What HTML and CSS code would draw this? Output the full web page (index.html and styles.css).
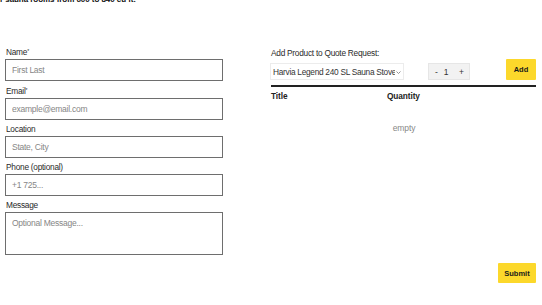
FILE: index.html
```html
<!DOCTYPE html>
<html lang="en">
<head>
<meta charset="utf-8">
<title>Quote Request</title>
<link rel="stylesheet" href="styles.css">
</head>
<body>
<p class="intro">r sauna rooms from 600 to 840 cu ft.</p>
<form class="form">
  <div class="cols">
    <div class="left">
      <div class="field">
        <label class="label">Name<span class="req">*</span></label>
        <input class="input" type="text" placeholder="First Last">
      </div>
      <div class="field">
        <label class="label">Email<span class="req">*</span></label>
        <input class="input" type="text" placeholder="example@email.com">
      </div>
      <div class="field">
        <label class="label">Location</label>
        <input class="input" type="text" placeholder="State, City">
      </div>
      <div class="field">
        <label class="label">Phone (optional)</label>
        <input class="input" type="text" placeholder="+1 725...">
      </div>
      <div class="field">
        <label class="label">Message</label>
        <textarea class="input area" placeholder="Optional Message..."></textarea>
      </div>
    </div>
    <div class="right">
      <div class="label rlabel">Add Product to Quote Request:</div>
      <div class="prow">
        <div class="select">
          <span class="seltext">Harvia Legend 240 SL Sauna Stove</span>
          <svg class="chev" width="5" height="3" viewBox="0 0 5 3"><path d="M0.5 0.5 L2.5 2.5 L4.5 0.5" fill="none" stroke="#777" stroke-width="0.8"/></svg>
        </div>
        <div class="qty">
          <span class="qminus">-</span>
          <span class="qval">1</span>
          <span class="qplus">+</span>
        </div>
        <button type="button" class="btn add">Add</button>
      </div>
      <div class="rule"></div>
      <div class="thead">
        <span class="th-title">Title</span>
        <span class="th-qty">Quantity</span>
      </div>
      <div class="empty">empty</div>
    </div>
  </div>
  <div class="actions">
    <button type="button" class="btn submit">Submit</button>
  </div>
</form>
</body>
</html>
```

FILE: styles.css
```css
body {
  margin: 0;
  width: 542px;
  height: 305px;
  overflow: hidden;
  background: #fff;
  color: #222;
  font-family: "Liberation Sans", Arial, sans-serif;
}

.intro {
  margin: -6px 0 0 0;
  font-size: 8px;
  line-height: 11px;
  font-weight: bold;
  letter-spacing: -0.05px;
  white-space: nowrap;
  color: #111;
}

.form {
  padding: 41px 6px 0 5px;
}

.cols {
  display: flex;
  justify-content: space-between;
}

.left {
  width: 218px;
  display: flex;
  flex-direction: column;
  gap: 4px;
}

.field {
  display: flex;
  flex-direction: column;
  gap: 1px;
}

.label {
  font-size: 8.3px;
  line-height: 11px;
  letter-spacing: -0.25px;
  color: #2a2a2a;
  padding-left: 1px;
}

.req {
  font-size: 5px;
  vertical-align: 2px;
}

.input {
  display: block;
  width: 100%;
  height: 22px;
  box-sizing: border-box;
  margin: 0;
  border: 1px solid #6e6e6e;
  border-radius: 0;
  padding: 0 6px;
  font-family: "Liberation Sans", Arial, sans-serif;
  font-size: 8.5px;
  letter-spacing: -0.25px;
  color: #333;
  background: #fff;
  outline: none;
}

.input::placeholder {
  color: #868686;
}

.area {
  height: 43px;
  padding: 5px 6px;
  resize: none;
}

.right {
  width: 266px;
  padding-top: 2px;
}

.rlabel {
  padding-left: 1px;
}

.prow {
  display: flex;
  align-items: flex-end;
}

.select {
  width: 134px;
  height: 17px;
  box-sizing: border-box;
  border: 1px solid #ececec;
  display: flex;
  align-items: center;
  justify-content: space-between;
  padding: 0 2px;
  font-size: 8.3px;
  letter-spacing: -0.28px;
  color: #333;
  white-space: nowrap;
  overflow: hidden;
}

.seltext {
  overflow: hidden;
}

.chev {
  flex: none;
  margin-top: 1px;
  margin-left: 1px;
}

.qty {
  flex: none;
  margin-left: 24px;
  width: 42px;
  height: 17px;
  box-sizing: border-box;
  background: #f2f2f2;
  border: 1px solid #e6e6e6;
  display: flex;
  align-items: center;
  font-size: 8.5px;
  color: #333;
}

.qminus {
  margin-left: 6px;
}

.qval {
  margin-left: 6px;
}

.qplus {
  margin-left: auto;
  margin-right: 5px;
}

.btn {
  border: none;
  border-radius: 1px;
  background: #fcd82b;
  color: #1a1a1a;
  font-family: "Liberation Sans", Arial, sans-serif;
  font-weight: bold;
  font-size: 7.5px;
  padding: 0;
  cursor: pointer;
}

.add {
  flex: none;
  margin-left: auto;
  width: 30px;
  height: 21px;
}

.rule {
  margin: 5px 0 0 1px;
  height: 2px;
  background: #222;
}

.thead {
  display: flex;
  margin-top: 3px;
  padding-left: 1px;
  font-size: 8.3px;
  line-height: 12px;
  font-weight: bold;
  letter-spacing: -0.1px;
  color: #222;
}

.th-title {
  width: 116px;
}

.empty {
  margin-top: 20px;
  text-align: center;
  font-size: 8.5px;
  line-height: 12px;
  letter-spacing: -0.1px;
  color: #888;
  padding-left: 2px;
}

.actions {
  display: flex;
  justify-content: flex-end;
  margin-top: 8px;
}

.submit {
  width: 38px;
  height: 20px;
}
```
